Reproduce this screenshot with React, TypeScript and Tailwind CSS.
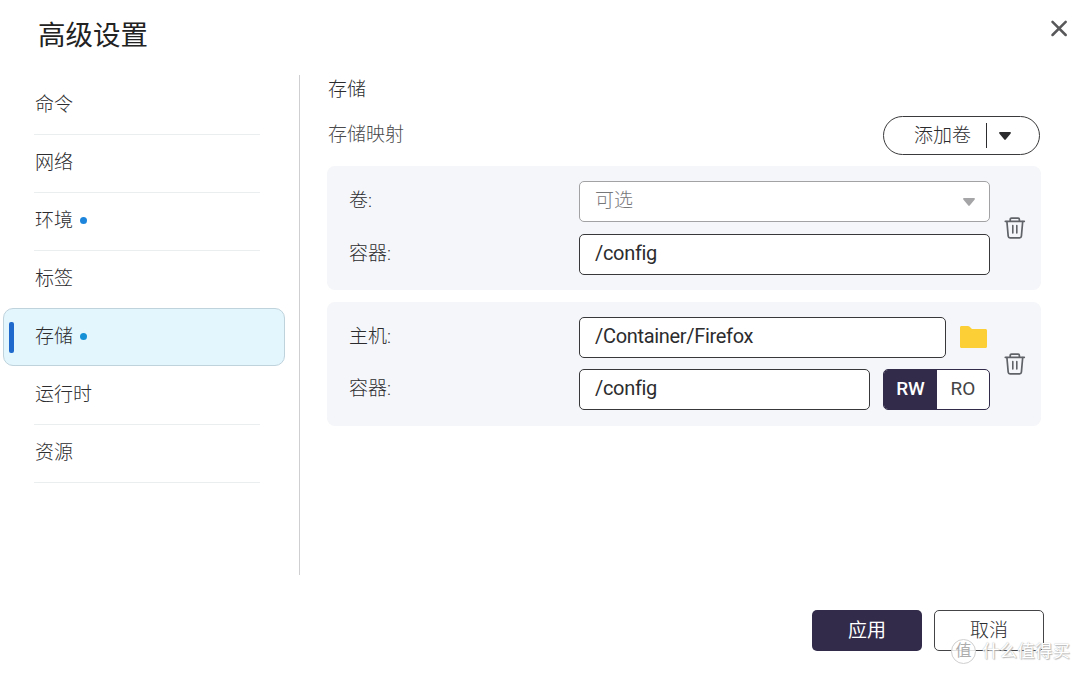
import { ReactNode } from 'react';

interface NavItem {
  label: string;
  changed?: boolean;
  active?: boolean;
}

const navItems: NavItem[] = [
  { label: '命令' },
  { label: '网络' },
  { label: '环境', changed: true },
  { label: '标签' },
  { label: '存储', changed: true, active: true },
  { label: '运行时' },
  { label: '资源' },
];

const TrashIcon = () => (
  <svg
    width="22"
    height="24"
    viewBox="0 0 22 24"
    fill="none"
    stroke="#606368"
    strokeWidth="1.7"
    strokeLinecap="round"
    strokeLinejoin="round"
  >
    <path d="M1.300 5.300h19" />
    <path d="M6.200 5V3.400c0-.8.500-1.200 1.300-1.200h6.600c.8 0 1.300.4 1.300 1.200V5" />
    <path d="M2.900 5.500l1.300 14.600c.1 1.100.8 1.700 1.800 1.700h9.600c1 0 1.700-.6 1.800-1.700l1.300-14.600" />
    <path d="M8.800 9.500v7.500M12.800 9.500v7.500" strokeWidth="1.600" />
  </svg>
);

const FolderIcon = () => (
  <svg width="27" height="22" viewBox="0 0 27 22" fill="#fdcf36">
    <path d="M1.500 0h6.500c.6 0 1 .2 1.400.6L12 3h13.500c.9 0 1.500.6 1.500 1.500v16c0 .9-.6 1.500-1.500 1.500h-24C.6 22 0 21.400 0 20.500v-19C0 .6.6 0 1.500 0z" />
  </svg>
);

const Caret = ({ color }: { color: string }) => (
  <svg width="12" height="8" viewBox="0 0 12 8" fill={color}>
    <path d="M1 0h10c.9 0 1.200.8.700 1.400L6.700 7.500c-.4.500-1 .5-1.400 0L.3 1.400C-.2.8.1 0 1 0z" />
  </svg>
);

const Field = ({ children, className }: { children: ReactNode; className: string }) => (
  <div className={`flex h-[41px] items-center rounded-[5px] border bg-white pl-[15px] ${className}`}>
    {children}
  </div>
);

const PathField = ({ value, className }: { value: string; className: string }) => (
  <Field className={`border-[#38383a] pb-[3px] text-[20px] font-normal tracking-[-0.32px] ${className}`}>
    {value}
  </Field>
);

const Card = ({ children }: { children: ReactNode }) => (
  <section className="flex h-[124px] items-start rounded-lg bg-[#f5f6fa] pt-[15px] pl-[22px] pr-[15px]">
    <div className="flex w-[641px] flex-col">{children}</div>
    <button className="ml-auto mt-[35px]">
      <TrashIcon />
    </button>
  </section>
);

const Row = ({ label, className = '', children }: { label: string; className?: string; children: ReactNode }) => (
  <div className={`flex h-[41px] items-center ${className}`}>
    <label className="w-[230px]">{label}</label>
    <div className="flex flex-1 items-center justify-between">{children}</div>
  </div>
);

const App = () => {
  return (
    <div className="relative flex h-[673px] w-[1080px] flex-col overflow-hidden bg-white font-[Roboto,'Noto_Sans_CJK_SC',sans-serif] text-[19px] font-light text-[#2c2c2e]">
      <header className="flex h-[75px] items-start justify-between pl-[38px] pr-[12px] pt-[16px]">
        <h1 className="text-[27.5px] leading-[40px] font-normal text-[#222]">高级设置</h1>
        <button className="mt-[4px]">
          <svg width="18" height="17" viewBox="0 0 18 17" stroke="#58585a" strokeWidth="2.5" strokeLinecap="round">
            <path d="M2.500 1.800l13.200 13.200M15.700 1.800L2.500 15" />
          </svg>
        </button>
      </header>

      <main className="flex h-[500px]">
        <nav className="w-[300px] border-r border-[#cfcfd1] pt-[2px]">
          {navItems.map((item) =>
            item.active ? (
              <div
                key={item.label}
                className="-mt-px mb-px ml-[3px] flex h-[58px] w-[282px] items-center rounded-[10px] border border-[#bfd3dc] bg-[#e3f6fe] pb-[2px] pl-[5px]"
              >
                <span className="mt-[2px] h-[31px] w-[5px] rounded-xs bg-[#1e69cb]" />
                <span className="ml-[21px] pt-[2px]">{item.label}</span>
                <span className="ml-[7px] size-[7px] rounded-full bg-[#1590d6]" />
              </div>
            ) : (
              <div
                key={item.label}
                className={`ml-[34px] flex h-[58px] w-[226px] items-center border-b pb-[3px] pl-px ${
                  item.label === '标签' ? 'border-transparent' : 'border-[#ebeeef]'
                }`}
              >
                <span className="pt-[2px]">{item.label}</span>
                {item.changed && <span className="mt-px ml-[7px] size-[7px] rounded-full bg-[#1d86dc]" />}
              </div>
            )
          )}
        </nav>

        <div className="ml-[27px] w-[714px]">
          <h2 className="pt-[2px] pl-px leading-[26px]">存储</h2>
          <div className="mt-[13px] flex h-[39px] items-center justify-between pl-px pr-px">
            <span className="pb-px text-[#4a4a4c]">存储映射</span>
            <button className="flex h-[39px] w-[157px] items-center rounded-full border border-[#3a3a3c] pl-[30px]">
              <span className="pt-px">添加卷</span>
              <span className="ml-[15px] mr-[12px] h-[25px] w-px bg-[#2c2c2e]" />
              <Caret color="#2c2c2e" />
            </button>
          </div>

          <div className="mt-[11px] flex flex-col gap-3">
            <Card>
              <Row label="卷:">
                <Field className="w-full justify-between border-[#a2a2a4] pr-[14px] text-[#77777a]">
                  <span className="pb-px">可选</span>
                  <Caret color="#a5a5a7" />
                </Field>
              </Row>
              <Row label="容器:" className="mt-3">
                <PathField className="w-full" value="/config" />
              </Row>
            </Card>

            <Card>
              <Row label="主机:">
                <PathField className="w-[367px]" value="/Container/Firefox" />
                <button className="mr-[3px] pb-[2px]">
                  <FolderIcon />
                </button>
              </Row>
              <Row label="容器:" className="mt-[11px]">
                <PathField className="w-[291px]" value="/config" />
                <div className="flex h-[41px] w-[107px] overflow-hidden rounded-[5px] border border-[#322c4a] bg-white leading-[38px]">
                  <button className="w-[53px] bg-[#322c4a] pb-px font-medium text-white">RW</button>
                  <button className="flex-1 pb-px font-normal text-[#444446]">RO</button>
                </div>
              </Row>
            </Card>
          </div>
        </div>
      </main>

      <footer className="flex justify-end gap-[12px] pr-9 pt-[35px]">
        <button className="h-[41px] w-[110px] rounded-[5px] bg-[#322c4a] pt-px font-normal text-white">应用</button>
        <button className="h-[41px] w-[110px] rounded-[5px] border border-[#444446] pt-px">取消</button>
      </footer>

      <div className="absolute top-[638px] left-[951px] flex items-center gap-[6px] font-normal text-white [text-shadow:0_0_1px_#aaa,1px_1px_1px_#bbb]">
        <span className="flex size-[25px] items-center justify-center rounded-full border border-[#cfcfcf] bg-white/85 text-[16px] text-[#adadad] [text-shadow:none]">
          值
        </span>
        <span className="text-[17.6px] leading-[26px]">什么值得买</span>
      </div>
    </div>
  );
};

export default App;
